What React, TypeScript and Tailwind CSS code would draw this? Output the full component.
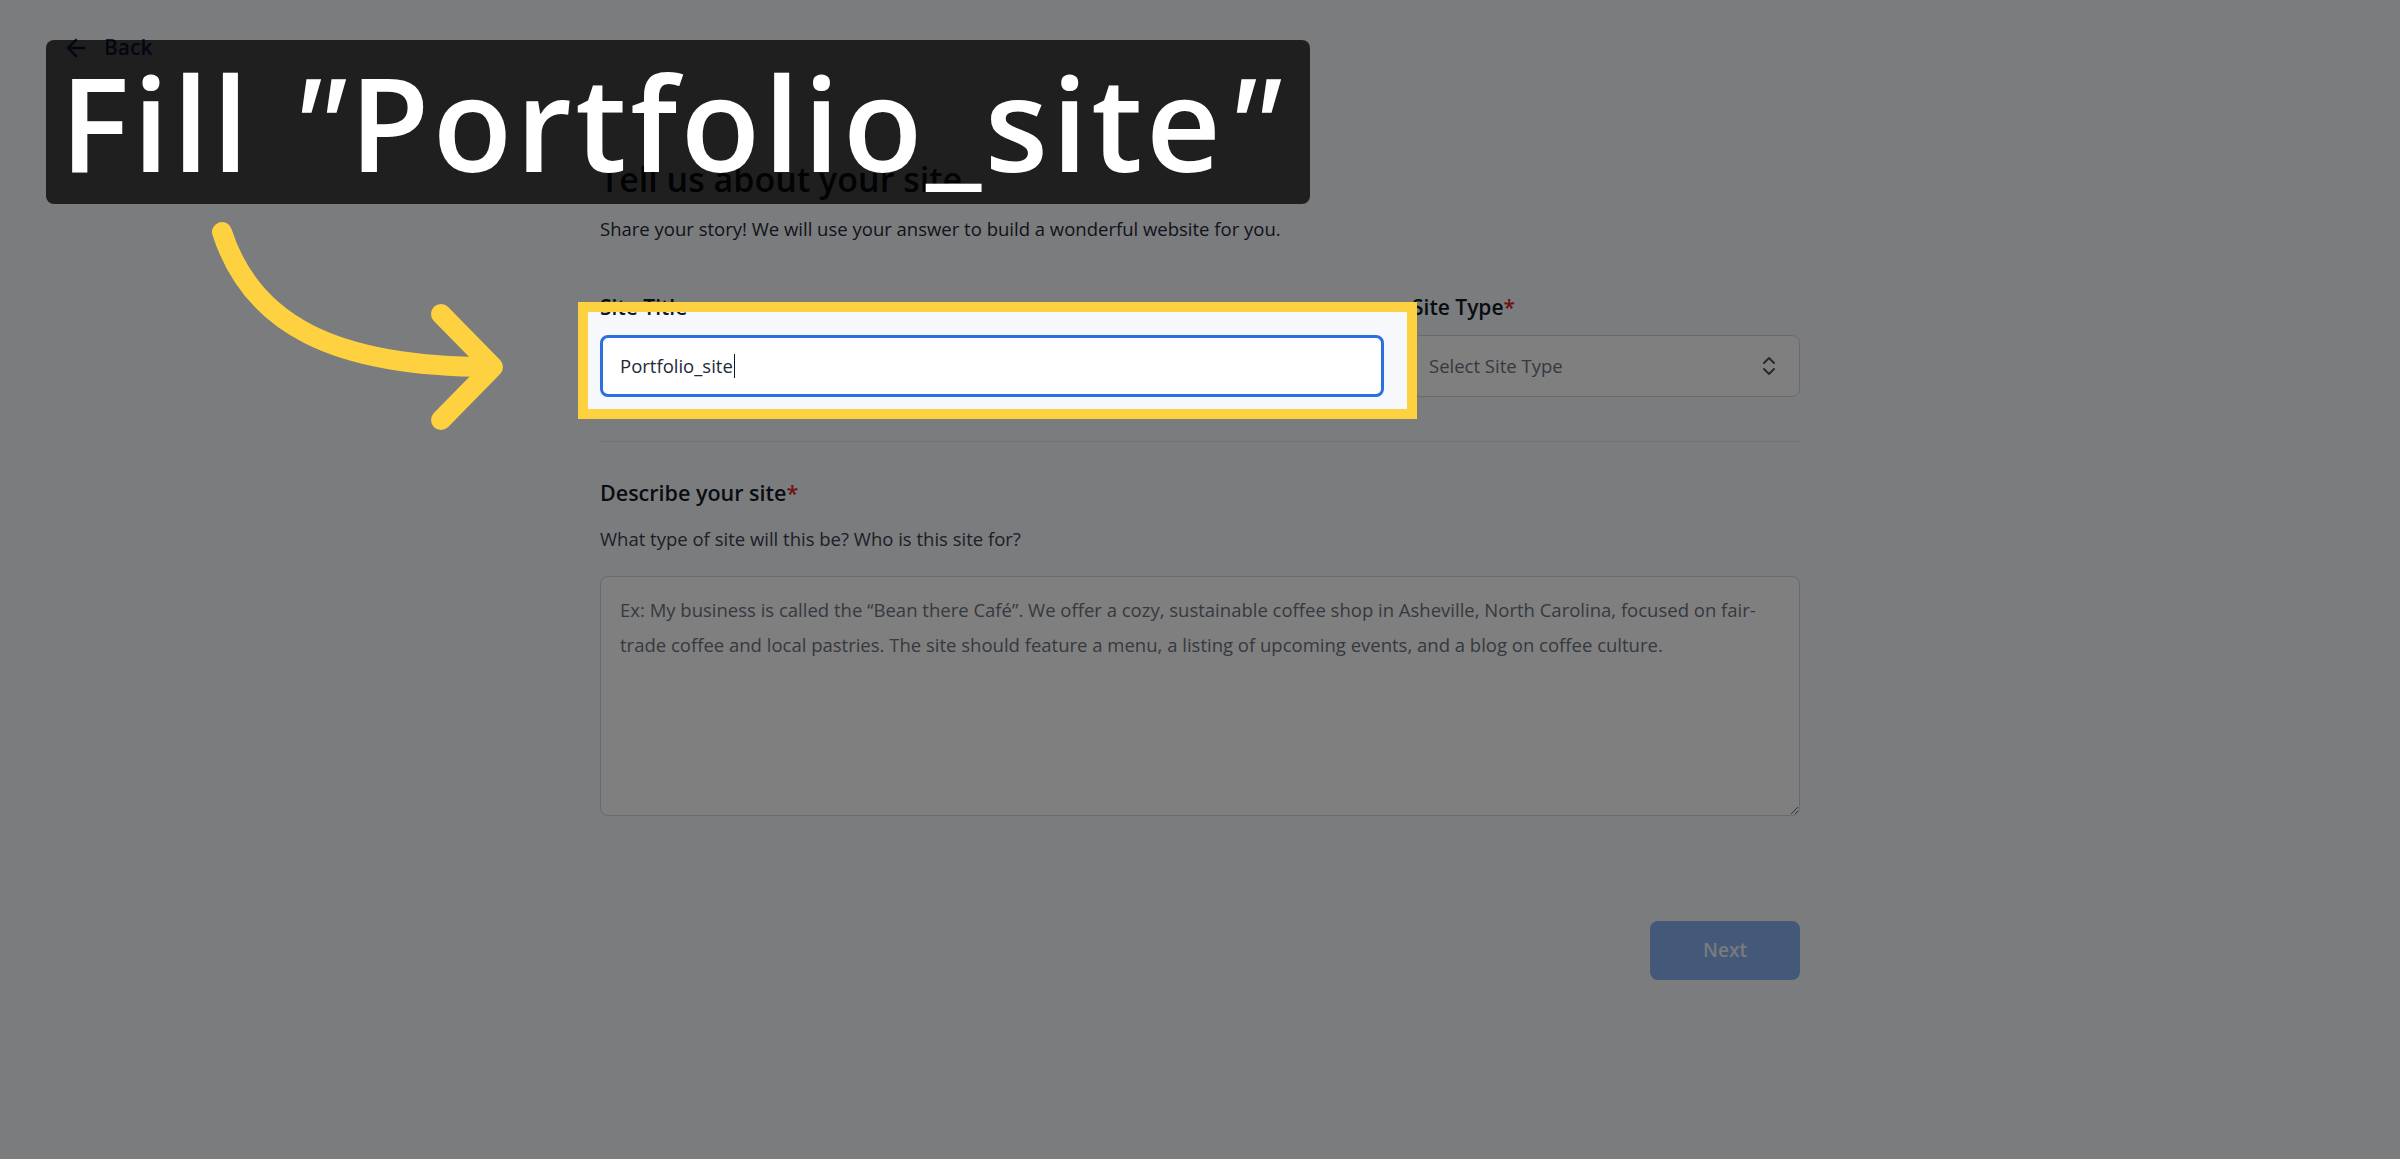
import { ArrowLeft } from "lucide-react";

const placeholder =
  "Ex: My business is called the \u201CBean there Caf\u00e9\u201D. We offer a cozy, sustainable coffee shop in Asheville, North Carolina, focused on fair-\ntrade coffee and local pastries. The site should feature a menu, a listing of upcoming events, and a blog on coffee culture.";

function UpDown() {
  return (
    <svg width="16" height="24" viewBox="0 0 16 24" fill="none" stroke="#4b5563" strokeWidth="2" strokeLinecap="round" strokeLinejoin="round">
      <path d="M3 9 L8 4 L13 9" />
      <path d="M3 15 L8 20 L13 15" />
    </svg>
  );
}

export default function App() {
  return (
    <div className="relative min-h-screen overflow-hidden bg-[#f6f8fc] font-['Open_Sans',sans-serif] text-[#111827]">
      <div className="px-[62px] pt-[36px]">
        <a className="flex h-6 items-center gap-[14px] text-[21px] font-semibold text-[#1e3a8a]">
          <ArrowLeft size={28} strokeWidth={2} />
          Back
        </a>
      </div>

      <main className="mx-auto w-[1200px] pt-[99px]">
        <h1 className="text-[34px] font-semibold leading-[40px]">Tell us about your site</h1>
        <p className="mt-[18px] text-[18.5px] leading-[24px] text-[#1f2937]">
          Share your story! We will use your answer to build a wonderful website for you.
        </p>

        <div className="mt-[52px] grid grid-cols-[784px_1fr] gap-7">
          <div>
            <label className="block text-[21px] font-semibold leading-[28px]">Site Title</label>
            <div className="relative mt-[14px]">
              <div className="flex h-[62px] items-center rounded-lg border-[3px] border-[#2b6fe0] bg-white px-[17px] text-[18.5px] text-[#1f2937]">
                Portfolio_site
                <span className="ml-px h-[24px] w-px bg-[#111827]" />
              </div>
              <div className="pointer-events-none absolute -bottom-[22px] -left-[22px] -right-[33px] -top-[33px] z-10 border-[10px] border-[#fed141] shadow-[0_0_0_9999px_rgba(0,0,0,0.5)]" />
            </div>
          </div>
          <div>
            <label className="block text-[21px] font-semibold leading-[28px]">
              Site Type<span className="text-[#dc2626]">*</span>
            </label>
            <div className="mt-[14px] flex h-[62px] items-center justify-between rounded-lg border border-[#d1d5db] bg-white pl-[16px] pr-[22px] text-[18.5px] text-[#6b7280]">
              Select Site Type
              <UpDown />
            </div>
          </div>
        </div>

        <hr className="mt-[44px] border-[#e5e7eb]" />

        <label className="mt-[37px] block text-[21.5px] font-semibold leading-[28px]">
          Describe your site<span className="text-[#dc2626]">*</span>
        </label>
        <p className="mt-[20px] text-[18.5px] leading-[24px] text-[#374151]">
          What type of site will this be? Who is this site for?
        </p>
        <textarea
          className="mt-[25px] block h-[240px] w-full rounded-lg border border-[#d1d5db] bg-white px-[19px] pt-[15px] text-[18.5px] leading-[35px] text-[#1f2937] placeholder:text-[#6b7280]"
          placeholder={placeholder}
        />

        <div className="mt-[105px] flex justify-end">
          <button className="h-[59px] w-[150px] rounded-lg bg-[#88b2f4] text-[19px] font-semibold text-[#f3f4f6]">
            Next
          </button>
        </div>
      </main>

      <svg className="pointer-events-none absolute left-0 top-0 z-20" width="560" height="460" fill="none" stroke="#fed141" strokeWidth="20" strokeLinecap="round" strokeLinejoin="round">
        <path d="M222 232 C 252 325, 335 367, 490 367" />
        <path d="M441 314 L493 367 L441 420" />
      </svg>

      <div className="absolute left-[46px] top-[40px] z-20 flex h-[164px] w-[1264px] items-center rounded-lg bg-black/75 pl-[14px]">
        <span className="font-['Open_Sans',sans-serif] text-[130px] font-semibold leading-none tracking-[3.5px] text-white">
          Fill <span className="inline-block -skew-x-12">"</span>Portfolio_site<span className="inline-block -skew-x-12">"</span>
        </span>
      </div>
    </div>
  );
}
